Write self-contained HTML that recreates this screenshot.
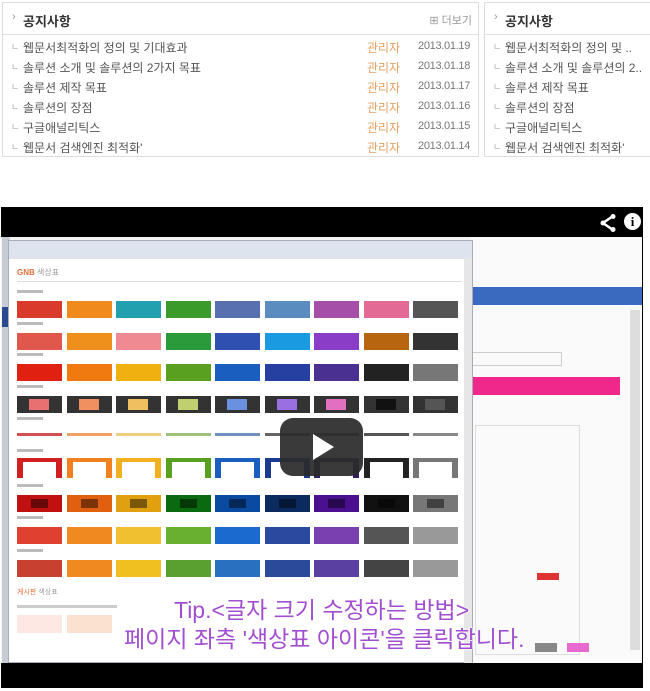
<!DOCTYPE html>
<html><head><meta charset="utf-8"><style>
*{margin:0;padding:0;box-sizing:border-box}
body{width:650px;height:691px;background:#fff;position:relative;overflow:hidden;font-family:"Liberation Sans","Noto Sans CJK KR",sans-serif}
.box{position:absolute;top:2px;height:155px;border:1px solid #ddd;background:#fff}
.hd{height:32px;border-bottom:1px solid #e2e2e2;position:relative}
.hd b{position:absolute;left:20px;top:8px;font-size:13px;color:#333}
.hd i{position:absolute;left:9px;top:8px;font-style:normal;color:#999;font-size:11px}
.more{position:absolute;right:6px;top:9px;font-size:11px;color:#999}
.row{position:absolute;left:0;height:20px;font-size:12px;color:#555;white-space:nowrap}
.row .t{position:absolute;left:20px;top:1px}
.row .bl{position:absolute;left:8px;top:2px;font-size:9px;color:#aaa}
.row .a{position:absolute;left:364px;top:1px;color:#e0a060}
.row .d{position:absolute;left:415px;top:2px;font-size:11px;color:#777;letter-spacing:-.3px}
.abs{position:absolute}
.sw{position:absolute;width:45px;height:17px}
.lb{position:absolute;font-size:5px;color:#999;height:3px;width:26px;background:#bbb}
.sub{position:absolute;color:#a14fd0;font-size:23px;white-space:nowrap;text-shadow:0 0 2px #fff,0 0 2px #fff;letter-spacing:0}
</style></head><body>
<div class="box" style="left:2px;width:477px">
 <div class="hd"><i>›</i><b>공지사항</b><span class="more">⊞ 더보기</span></div>
 <div class="row" style="top:35px"><span class="bl">ㄴ</span><span class="t">웹문서최적화의 정의 및 기대효과</span><span class="a">관리자</span><span class="d">2013.01.19</span></div>
 <div class="row" style="top:55px"><span class="bl">ㄴ</span><span class="t">솔루션 소개 및 솔루션의 2가지 목표</span><span class="a">관리자</span><span class="d">2013.01.18</span></div>
 <div class="row" style="top:75px"><span class="bl">ㄴ</span><span class="t">솔루션 제작 목표</span><span class="a">관리자</span><span class="d">2013.01.17</span></div>
 <div class="row" style="top:95px"><span class="bl">ㄴ</span><span class="t">솔루션의 장점</span><span class="a">관리자</span><span class="d">2013.01.16</span></div>
 <div class="row" style="top:115px"><span class="bl">ㄴ</span><span class="t">구글애널리틱스</span><span class="a">관리자</span><span class="d">2013.01.15</span></div>
 <div class="row" style="top:135px"><span class="bl">ㄴ</span><span class="t">웹문서 검색엔진 최적화'</span><span class="a">관리자</span><span class="d">2013.01.14</span></div>
</div>
<div class="box" style="left:484px;width:180px">
 <div class="hd"><i>›</i><b>공지사항</b></div>
 <div class="row" style="top:35px"><span class="bl">ㄴ</span><span class="t">웹문서최적화의 정의 및 ..</span></div>
 <div class="row" style="top:55px"><span class="bl">ㄴ</span><span class="t">솔루션 소개 및 솔루션의 2..</span></div>
 <div class="row" style="top:75px"><span class="bl">ㄴ</span><span class="t">솔루션 제작 목표</span></div>
 <div class="row" style="top:95px"><span class="bl">ㄴ</span><span class="t">솔루션의 장점</span></div>
 <div class="row" style="top:115px"><span class="bl">ㄴ</span><span class="t">구글애널리틱스</span></div>
 <div class="row" style="top:135px"><span class="bl">ㄴ</span><span class="t">웹문서 검색엔진 최적화'</span></div>
</div>

<div class="abs" style="left:1px;top:207px;width:642px;height:481px;background:#000"></div>
<div class="abs" style="left:1px;top:237px;width:641px;height:426px;background:#f4f4f4"></div>
<div class="abs" style="left:470px;top:237px;width:172px;height:426px;background:#fafafa"></div>
<div class="abs" style="left:470px;top:287px;width:172px;height:18px;background:#3a6ac0"></div>
<div class="abs" style="left:470px;top:377px;width:150px;height:18px;background:#f0288c"></div>
<div class="abs" style="left:470px;top:352px;width:92px;height:14px;border:1px solid #ccc"></div>
<div class="abs" style="left:630px;top:310px;width:10px;height:340px;background:#ddd"></div>
<div class="abs" style="left:475px;top:425px;width:105px;height:230px;border:1px solid #ddd"></div>
<div class="abs" style="left:537px;top:573px;width:22px;height:7px;background:#d33"></div>
<div class="abs" style="left:567px;top:643px;width:22px;height:9px;background:#e66ad0"></div>
<div class="abs" style="left:535px;top:643px;width:22px;height:9px;background:#888"></div>
<div class="abs" style="left:2px;top:237px;width:8px;height:426px;background:#c8ccd4"></div>
<div class="abs" style="left:2px;top:307px;width:6px;height:20px;background:#2a4a90"></div>
<div class="abs" style="left:8px;top:240px;width:465px;height:423px;background:#fff;border:1px solid #aab"></div>
<div class="abs" style="left:9px;top:241px;width:463px;height:18px;background:#dde4ee"></div>
<div class="abs" style="left:464px;top:259px;width:8px;height:404px;background:#e6e6e6"></div>
<div class="abs" style="left:17px;top:267px;font-size:8px;color:#e0703a;font-weight:bold">GNB <span style="color:#999;font-weight:normal">색상표</span></div>
<div class="abs" style="left:17px;top:281px;width:445px;height:1px;background:#ddd"></div>
<div id="sw"></div>
<div class="abs" style="left:17px;top:587px;font-size:7px;color:#e0703a">게시판 <span style="color:#999">색상표</span></div>
<div class="abs" style="left:17px;top:605px;width:100px;height:3px;background:#ccc"></div>
<div class="abs" style="left:17px;top:615px;width:45px;height:18px;background:#fde8e4"></div>
<div class="abs" style="left:67px;top:615px;width:45px;height:18px;background:#fbe2d0"></div>

<div class="abs" style="left:280px;top:418px;width:83px;height:58px;background:#2b2b2b;border-radius:13px;opacity:.93"></div>
<div class="abs" style="left:313px;top:434px;width:0;height:0;border-left:21px solid #fff;border-top:13px solid transparent;border-bottom:13px solid transparent"></div>
<svg class="abs" style="left:598px;top:213px" width="20" height="20" viewBox="0 0 20 20"><path d="M15 3 L5 10 L15 17" stroke="#fff" stroke-width="2.5" fill="none"/><circle cx="15" cy="3.5" r="2.5" fill="#fff"/><circle cx="5" cy="10" r="2.5" fill="#fff"/><circle cx="15" cy="16.5" r="2.5" fill="#fff"/></svg>
<div class="abs" style="left:624px;top:213px;width:17px;height:17px;border-radius:50%;background:#fff;color:#000;font-weight:bold;font-size:13px;text-align:center;line-height:17px;font-family:'Liberation Serif',serif">i</div>
<div class="sub" style="left:174px;top:591px">Tip.&lt;글자 크기 수정하는 방법&gt;</div>
<div class="sub" style="left:124px;top:620px">페이지 좌측 '색상표 아이콘'을 클릭합니다.</div>

<script>
var rows=[
[301,'f',["#d93a2c","#f08a1c","#23a0b0","#3a9a2a","#5870b0","#5a8cc0","#a54fa8","#e26a94","#555"]],
[333,'f',["#e0584c","#f0901c","#ee8a92","#2a9a3a","#2f50b0","#1a9ae0","#8a3ec8","#b8650f","#333"]],
[364,'f',["#e02010","#f07a10","#f0b010","#5aa020","#1a5ec0","#2540a0","#4a3090","#222","#777"]],
[396,'d',["#e87070","#f09060","#f0c060","#c0d070","#6a90e0","#9a70e0","#e070c0","#111","#555"]],
[428,'u',["#d05050","#f0a060","#f0d080","#a0c080","#7090c0","#666","#666","#555","#888"]],
[460,'o',["#d02020","#f08020","#f0b020","#5aa020","#1a5ec0","#1a3a90","#302060","#222","#777"]],
[495,'i',["#c01010","#e06010","#e0a010","#0a6a10","#0a4aa0","#0a2a60","#4a1090","#111","#777"]],
[527,'f',["#e04030","#f08a20","#f0c030","#6ab030","#1a6ad0","#2a4aa0","#7a40b0","#555","#999"]],
[560,'f',["#c84030","#f08a20","#f0c020","#5aa030","#2a70c0","#2a4a9a","#5a40a0","#444","#999"]]];
var h='';
rows.forEach(function(r){var y=r[0];h+='<div class="lb" style="left:17px;top:'+(y-11)+'px"></div>';
r[2].forEach(function(c,i){var x=17+i*49.5;
if(r[1]=='f')h+='<div class="sw" style="left:'+x+'px;top:'+y+'px;background:'+c+'"></div>';
else if(r[1]=='d')h+='<div class="sw" style="left:'+x+'px;top:'+y+'px;background:#333"><div style="position:absolute;left:12px;top:3px;width:20px;height:11px;background:'+c+'"></div></div>';
else if(r[1]=='u')h+='<div class="sw" style="left:'+x+'px;top:'+(y+5)+'px;height:3px;background:'+c+'"></div>';
else if(r[1]=='o')h+='<div class="sw" style="left:'+x+'px;top:'+(y-2)+'px;height:20px;background:'+c+'"><div style="position:absolute;left:6px;top:4px;width:33px;height:16px;background:#fff"></div></div>';
else h+='<div class="sw" style="left:'+x+'px;top:'+y+'px;background:'+c+'"><div style="position:absolute;left:14px;top:4px;width:17px;height:9px;background:rgba(0,0,0,.45)"></div></div>';
});});
document.getElementById('sw').innerHTML=h;
</script>
</body></html>
